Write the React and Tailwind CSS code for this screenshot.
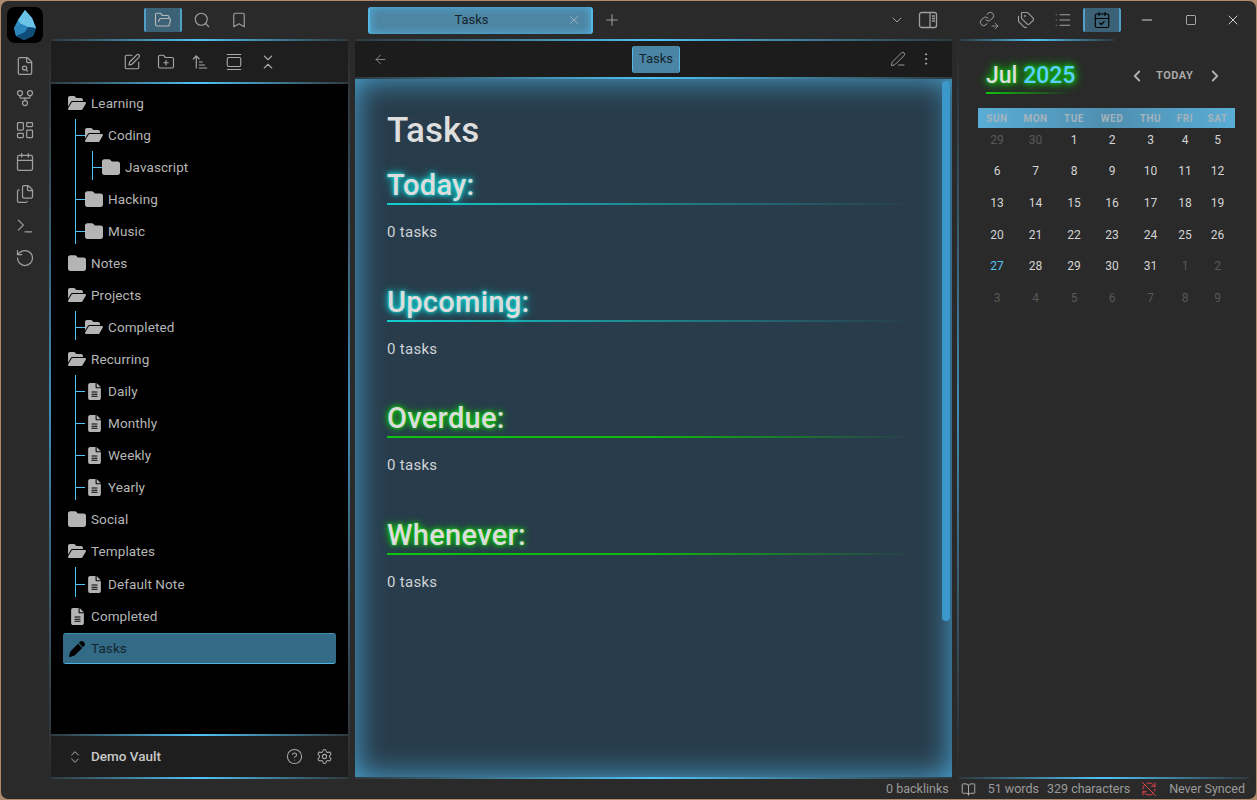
import React from 'react';
import {
  FolderOpen, Search, Bookmark, SquarePen, FolderPlus, ArrowUpNarrowWide, GalleryVertical, ChevronsDownUp,
  FileSearch, GitFork, LayoutDashboard, Calendar, Files, Terminal, RotateCcw, Link, Tags, List, CalendarCheck,
  Minus, Square, X, ChevronDown, Plus, ArrowLeft, ArrowRight, PenLine, EllipsisVertical, ChevronsUpDown, CircleHelp,
  Settings, BookOpen, RefreshCwOff, ChevronLeft, ChevronRight,
} from 'lucide-react';
import { FaFolder, FaFolderOpen, FaFileLines, FaPen } from 'react-icons/fa6';

const fontStack = 'font-[Roboto,"Liberation_Sans",sans-serif]';

const ribbon = [FileSearch, GitFork, LayoutDashboard, Calendar, Files, Terminal, RotateCcw];

const tree = [
  { name: 'Learning', icon: 'open', children: [
    { name: 'Coding', icon: 'open', children: [{ name: 'Javascript', icon: 'folder' }] },
    { name: 'Hacking', icon: 'folder' },
    { name: 'Music', icon: 'folder' },
  ] },
  { name: 'Notes', icon: 'folder' },
  { name: 'Projects', icon: 'open', children: [{ name: 'Completed', icon: 'open' }] },
  { name: 'Recurring', icon: 'open', children: [
    { name: 'Daily', icon: 'file' },
    { name: 'Monthly', icon: 'file' },
    { name: 'Weekly', icon: 'file' },
    { name: 'Yearly', icon: 'file' },
  ] },
  { name: 'Social', icon: 'folder' },
  { name: 'Templates', icon: 'open', children: [{ name: 'Default Note', icon: 'file', gap: true }] },
  { name: 'Completed', icon: 'file' },
];

const sections = [
  { title: 'Today:', glow: 'cyan' },
  { title: 'Upcoming:', glow: 'cyan' },
  { title: 'Overdue:', glow: 'green' },
  { title: 'Whenever:', glow: 'green' },
];

const days = ['SUN', 'MON', 'TUE', 'WED', 'THU', 'FRI', 'SAT'];
const weeks = [
  [29, 30, 1, 2, 3, 4, 5],
  [6, 7, 8, 9, 10, 11, 12],
  [13, 14, 15, 16, 17, 18, 19],
  [20, 21, 22, 23, 24, 25, 26],
  [27, 28, 29, 30, 31, 1, 2],
  [3, 4, 5, 6, 7, 8, 9],
];

function GlowLine() {
  return <div className="h-[2px] shrink-0 bg-linear-to-r from-[#4fc3f7]/10 via-[#4fc3f7] to-[#4fc3f7]/10" />;
}

function SideStrip() {
  return <div className="w-[2px] shrink-0 bg-linear-to-b from-[#2a2a2a] via-[#3f8fb8] to-[#2a2a2a]" />;
}

function TreeIcon({ type }) {
  if (type === 'open') return <FaFolderOpen className="w-[18px] h-[16px] text-[#b4b4b4] shrink-0" />;
  if (type === 'folder') return <FaFolder className="w-[18px] h-[18px] text-[#b4b4b4] shrink-0" />;
  return <span className="w-[18px] flex justify-center shrink-0"><FaFileLines className="w-[13px] h-[17px] text-[#b4b4b4]" /></span>;
}

function TreeNode({ node, nested }) {
  return (
    <>
      <div className={`flex items-center h-8 text-[13.5px] tracking-[0.1px] text-[#b6b6b6] ${node.gap ? 'mt-px' : ''}`}>
        {nested && <span className="w-[9px] h-px bg-[#4fc3f7] shrink-0" />}
        <TreeIcon type={node.icon} />
        <span className="ml-[5px]">{node.name}</span>
      </div>
      {node.children && (
        <div className={`flex flex-col mb-[3px] border-l border-[#4fc3f7] ${nested ? 'ml-[16px]' : 'ml-[7px]'}`}>
          <div className="-mb-[3px]">
            {node.children.map(c => <TreeNode key={c.name} node={c} nested />)}
          </div>
        </div>
      )}
    </>
  );
}

function ObsidianLogo() {
  return (
    <div className="w-9 h-9 rounded-lg bg-black flex items-center justify-center">
      <svg width="24" height="32" viewBox="0 0 24 32">
        <path d="M12 1 L19 9 L23 19 L20 27 L11 31 L3 27 L1 19 L5 11 Z" fill="#2f8fc4" />
        <path d="M12 1 L19 9 L23 19 L15 18 L8 15 L5 11 Z" fill="#6cc3e8" />
        <path d="M1 19 L8 15 L15 18 L12 23 L3 27 Z" fill="#2a86bb" />
        <path d="M3 27 L12 23 L15 18 L23 19 L20 27 L11 31 Z" fill="#0f4c78" />
      </svg>
    </div>
  );
}

function ActiveTab({ children }) {
  return (
    <div className="w-[38px] h-6 rounded-[2px] bg-[#3c6277] border-x-2 border-[#4f9fc9] flex items-center justify-center shrink-0">
      {children}
    </div>
  );
}

export default function App() {
  return (
    <div className={`w-[1257px] h-[800px] bg-[#b08a6c] p-px ${fontStack}`}>
      <div className="w-full h-full rounded-[7px] bg-[#2a2a2a] flex flex-col overflow-hidden">
        <div className="flex flex-1 min-h-0">
          {/* ribbon */}
          <div className="w-[48px] shrink-0 flex flex-col items-center pt-[6px]">
            <ObsidianLogo />
            <div className="flex flex-col items-center gap-[12px] mt-[13px]">
              {ribbon.map((Icon, i) => <Icon key={i} className="w-5 h-5 text-[#a0a0a0]" strokeWidth={1.5} />)}
            </div>
          </div>

          {/* left column */}
          <div className="w-[301px] shrink-0 flex flex-col">
            <div className="h-[38px] flex items-center pl-[95px] shrink-0">
              <ActiveTab><FolderOpen className="w-[18px] h-[18px] text-[#b8b8b8]" strokeWidth={1.5} /></ActiveTab>
              <Search className="w-[18px] h-[18px] text-[#a0a0a0] ml-[11px]" strokeWidth={1.5} />
              <Bookmark className="w-[18px] h-[18px] text-[#a0a0a0] ml-[19px]" strokeWidth={1.5} />
            </div>
            <div className="flex-1 min-h-0 flex">
              <SideStrip />
              <div className="w-[297px] shrink-0 flex flex-col">
                <GlowLine />
                <div className="h-[41px] bg-[#1e1e1e] flex items-center justify-center gap-[16px] shrink-0 pl-px">
                  {[SquarePen, FolderPlus, ArrowUpNarrowWide, GalleryVertical, ChevronsDownUp].map((Icon, i) => (
                    <Icon key={i} className="w-[18px] h-[18px] text-[#a8a8a8]" strokeWidth={1.5} />
                  ))}
                </div>
                <GlowLine />
                <div className="flex-1 min-h-0 bg-black pl-[17px] pt-[3px] pr-3 flex flex-col">
                  {tree.map(n => <TreeNode key={n.name} node={n} />)}
                  <div className="-ml-[5px] mt-px h-[31px] rounded-[3px] bg-[#336a85] border-y border-t-[#3f8db3] border-b-[#4fb0de] flex items-center pl-[5px] text-[13.5px] tracking-[0.1px] text-[#15262f] shrink-0">
                    <span className="w-[18px] flex justify-center"><FaPen className="w-[16px] h-[16px] text-black" /></span>
                    <span className="ml-[5px]">Tasks</span>
                  </div>
                </div>
                <GlowLine />
                <div className="h-[41px] bg-[#1e1e1e] flex items-center pl-[16px] pr-[15px] shrink-0">
                  <ChevronsUpDown className="w-[16px] h-[16px] text-[#b0b0b0]" strokeWidth={1.5} />
                  <span className="ml-[8px] text-[13.5px] font-medium text-[#c8c8c8]">Demo Vault</span>
                  <CircleHelp className="w-[17px] h-[17px] text-[#a8a8a8] ml-auto" strokeWidth={1.5} />
                  <Settings className="w-[17px] h-[17px] text-[#a8a8a8] ml-[13px]" strokeWidth={1.5} />
                </div>
                <GlowLine />
              </div>
              <SideStrip />
            </div>
          </div>

          {/* center column */}
          <div className="w-[597px] shrink-0 ml-[5px] flex flex-col">
            <div className="h-[38px] flex items-center shrink-0 pl-[13px] pr-[14px]">
              <div className="relative w-[225px] h-[27px] rounded-[3px] bg-[#4e86a4] border-x-2 border-[#56b7e4] shadow-[inset_0_0_8px_#4fb3e0] flex items-center justify-center pr-[18px] text-[13px] text-[#14242d]">
                Tasks
                <X className="absolute right-[10px] top-[6px] w-[14px] h-[14px] text-[#9fb4c0]" strokeWidth={1.5} />
              </div>
              <Plus className="w-[18px] h-[18px] text-[#9a9a9a] ml-[10px]" strokeWidth={1.5} />
              <ChevronDown className="w-4 h-4 text-[#a0a0a0] ml-auto" strokeWidth={1.5} />
              <svg className="w-[20px] h-[20px] text-[#a0a0a0] ml-[13px]" viewBox="0 0 20 20" fill="none" stroke="currentColor" strokeWidth="1.3">
                <rect x="1.5" y="2.5" width="17" height="15" rx="2" />
                <path d="M12 2.5v15M14 6h3M14 8.5h3M14 11h3" />
              </svg>
            </div>
            <GlowLine />
            <div className="h-[36px] bg-[#1c1c1c] flex items-center shrink-0 pl-[18px] pr-[18px]">
              <ArrowLeft className="w-[15px] h-[15px] text-[#8a8a8a]" strokeWidth={1.5} />
              <div className="w-[48px] h-[27px] ml-[244px] rounded-[3px] bg-[#4a85a6] border-x border-[#56b7e4] flex items-center justify-center text-[13px] text-[#14242d]">Tasks</div>
              <PenLine className="w-[16px] h-[16px] text-[#9a9a9a] ml-auto" strokeWidth={1.5} />
              <EllipsisVertical className="w-[16px] h-[16px] text-[#b0b0b0] ml-[12px]" strokeWidth={1.5} />
            </div>
            <GlowLine />
            <div className="relative flex-1 min-h-0 bg-[#283c4b] shadow-[inset_0_0_30px_#4aa8d8] pl-8 pt-[30px] pr-[37px]">
              <div className="absolute right-[2px] top-[2px] w-[8px] h-[540px] rounded-full bg-[#3a98ca]" />
              <h1 className="h-[44px] text-[35px] leading-[44px] font-medium text-[#dedede]">Tasks</h1>
              <div className="mt-[14px]">
                {sections.map(s => (
                  <section key={s.title} className="h-[116.67px]">
                    <h2 className={`h-[36px] text-[29px] leading-[36px] tracking-[0.3px] font-medium text-[#dcdcdc] ${s.glow === 'cyan' ? '[text-shadow:0_0_2px_#12d6d6,0_0_5px_#12d6d6,0_0_10px_#12d6d6]' : '[text-shadow:0_0_2px_#0fc90f,0_0_5px_#0fc90f,0_0_9px_#0fc90f]'}`}>{s.title}</h2>
                    <div className={`h-[2px] bg-linear-to-r to-transparent ${s.glow === 'cyan' ? 'from-[#14cfcf]' : 'from-[#0fc40f] via-[#0fb80f]'}`} />
                    <p className="mt-[16px] text-[15px] leading-[22px] tracking-[0.3px] text-[#d0d4d8]">0 tasks</p>
                  </section>
                ))}
              </div>
            </div>
            <GlowLine />
          </div>

          {/* right column */}
          <div className="flex-1 min-w-0 ml-[5px] flex">
            <div className="mt-[38px] flex"><SideStrip /></div>
            <div className="flex-1 min-w-0 flex flex-col">
              <div className="h-[38px] flex items-center shrink-0 pl-[20px]">
                <span className="relative block w-[18px] h-[18px]">
                  <Link className="w-[16px] h-[16px] text-[#a0a0a0]" strokeWidth={1.5} />
                  <ArrowRight className="absolute -right-[3px] -bottom-[2px] w-[10px] h-[10px] text-[#a0a0a0]" strokeWidth={2} />
                </span>
                <Tags className="w-[18px] h-[18px] text-[#a0a0a0] ml-[20px]" strokeWidth={1.5} />
                <List className="w-[18px] h-[18px] text-[#a0a0a0] ml-[19px]" strokeWidth={1.5} />
                <div className="ml-[11px]"><ActiveTab><CalendarCheck className="w-[18px] h-[18px] text-black" strokeWidth={1.5} /></ActiveTab></div>
                <Minus className="w-[16px] h-[16px] text-[#d0d0d0] ml-[18px]" strokeWidth={1.5} />
                <Square className="w-[12px] h-[12px] text-[#d0d0d0] ml-[30px]" strokeWidth={1.5} />
                <X className="w-[16px] h-[16px] text-[#d0d0d0] ml-[28px]" strokeWidth={1.5} />
              </div>
              <div className="h-[2px] w-[155px] bg-linear-to-r from-[#4fc3f7]/10 via-[#4fc3f7] to-[#4fc3f7]/10 shrink-0" />
              <div className="flex-1 min-h-0 pl-[19px] pt-[19px]">
                <div className="flex items-center h-[32px]">
                  <div className="ml-[8px] w-[87px] whitespace-nowrap text-[23px] leading-[32px] font-medium [text-shadow:0_0_4px_#0fc40f,0_0_8px_#0fc40f,0_0_12px_#0fc40f]">
                    <span className="text-[#dcdcdc]">Jul</span> <span className="text-[#5cd0ff]">2025</span>
                  </div>
                  <ChevronLeft className="w-[18px] h-[18px] text-[#b0b0b0] ml-[55px]" strokeWidth={2.5} />
                  <span className="ml-[10px] text-[11px] font-bold tracking-[0.5px] text-[#a8a8a8]">TODAY</span>
                  <ChevronRight className="w-[18px] h-[18px] text-[#b0b0b0] ml-[13px]" strokeWidth={2.5} />
                </div>
                <div className="ml-[8px] w-[84px] h-[2px] bg-linear-to-r from-[#0fc40f] to-transparent" />
                <div className="mt-[14px] w-[257px] grid grid-cols-[38px_39px_38px_38px_39px_30px_35px] h-[20px] items-center bg-linear-to-r from-[#5aadd6] via-[#4f8fb0] to-[#5aadd6] text-center text-[10px] font-bold tracking-[0.5px] text-[#a4b4bd]">
                  {days.map(d => <span key={d}>{d}</span>)}
                </div>
                <div className="w-[257px] mt-[-6px]">
                  {weeks.map((week, w) => (
                    <div key={w} className="grid grid-cols-[38px_39px_38px_38px_39px_30px_35px] h-[31.6px] pt-[4px] items-center text-center text-[12px]">
                      {week.map((d, i) => {
                        const dim = (w === 0 && d > 20) || (w === 4 && d < 10) || w === 5;
                        const today = w === 4 && i === 0;
                        return <span key={i} className={today ? 'text-[#56c4f4]' : dim ? 'text-[#585858]' : 'text-[#d4d4d4]'}>{d}</span>;
                      })}
                    </div>
                  ))}
                </div>
              </div>
              <div className="mr-[7px]"><GlowLine /></div>
            </div>
          </div>
        </div>

        {/* status bar */}
        <div className="h-[20px] shrink-0 flex items-center justify-end pr-[11px] text-[12.5px] text-[#9a9a9a]">
          <span>0 backlinks</span>
          <BookOpen className="w-[15px] h-[15px] text-[#b0b0b0] ml-[12px]" strokeWidth={1.5} />
          <span className="ml-[12px]">51 words</span>
          <span className="ml-[8px]">329 characters</span>
          <RefreshCwOff className="w-[16px] h-[16px] text-[#e0414b] ml-[11px]" strokeWidth={1.5} />
          <span className="ml-[12px]">Never Synced</span>
        </div>
      </div>
    </div>
  );
}
